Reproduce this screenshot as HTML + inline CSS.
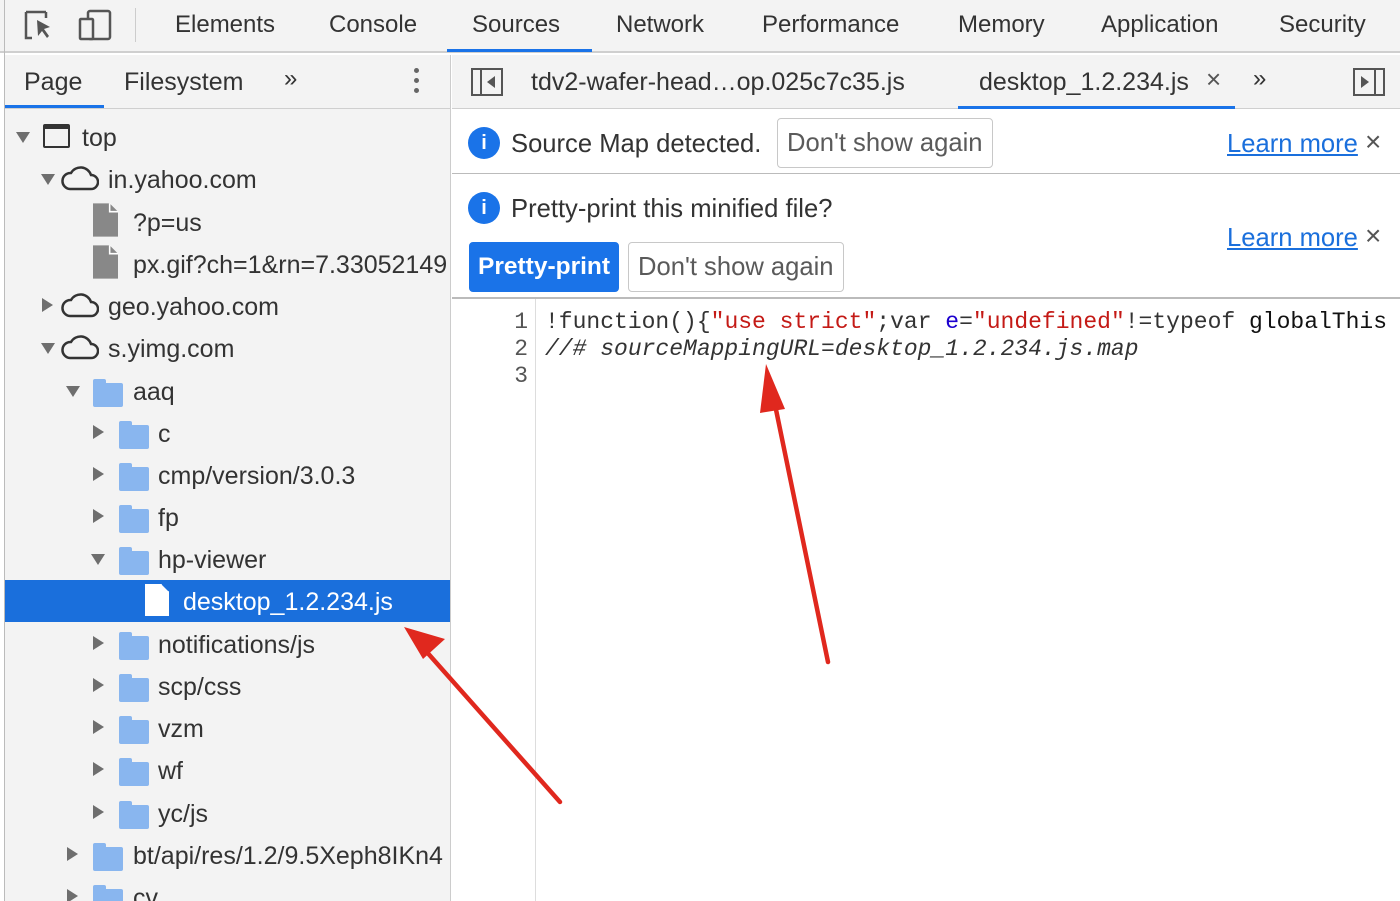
<!DOCTYPE html>
<html><head><meta charset="utf-8"><style>
*{margin:0;padding:0;box-sizing:border-box}
body{width:1400px;height:901px;overflow:hidden;background:#fff;font-family:"Liberation Sans",Arial,sans-serif;color:#333;position:relative}
.a{position:absolute;white-space:nowrap}
.t{font-size:24px;line-height:30px}
.tt{font-size:25px;line-height:30px}
.ib{font-size:25.6px;line-height:30px}
.tab{color:#333}
.mono{font-family:"Liberation Mono",monospace;font-size:23px;line-height:27px}
.btn{position:absolute;border:1px solid #c8c8c8;border-radius:4px;background:#fff;color:#5a5a5a;font-size:25.6px;line-height:48px;padding:0 9px}
.link{color:#1a6fdc;text-decoration:underline}
.tri{position:absolute;width:0;height:0}
.r{border-top:7px solid transparent;border-bottom:7px solid transparent;border-left:11px solid #6e6e6e}
.d{border-left:7px solid transparent;border-right:7px solid transparent;border-top:11px solid #6e6e6e}
.fold{position:absolute;width:30px;height:24px;background:#89b6ef;border-radius:2px}
.fold:before{content:"";position:absolute;left:0;top:-4px;width:13px;height:6px;background:#89b6ef;border-radius:2px 2px 0 0}
</style></head><body>
<div class="a" style="left:0;top:0;width:1400px;height:53px;background:#f3f3f3;border-bottom:2px solid #cfcfcf"></div>
<div class="a" style="left:4px;top:0;width:1px;height:901px;background:#bbb"></div>
<svg class="a" style="left:22px;top:8px" width="100" height="34" viewBox="0 0 100 34">
<path d="M4 4h20M4 4v26h6M24 4v6" stroke="#555" stroke-width="2.5" fill="none"/>
<path d="M15 12l13 7-6 2 5 7-2 2-5-7-4 5z" fill="#555"/>
<rect x="66" y="3" width="22" height="28" rx="2" stroke="#555" stroke-width="2.5" fill="none"/>
<rect x="58" y="11" width="13" height="20" rx="1" stroke="#555" stroke-width="2.5" fill="#f3f3f3"/>
</svg>
<div class="a" style="left:135px;top:8px;width:1px;height:34px;background:#ccc"></div>
<div class="a t tab" style="left:175px;top:10px">Elements</div>
<div class="a t tab" style="left:329px;top:10px">Console</div>
<div class="a t tab" style="left:472px;top:10px">Sources</div>
<div class="a" style="left:447px;top:49px;width:145px;height:3px;background:#1a73e8"></div>
<div class="a t tab" style="left:616px;top:10px">Network</div>
<div class="a t tab" style="left:762px;top:10px">Performance</div>
<div class="a t tab" style="left:958px;top:10px">Memory</div>
<div class="a t tab" style="left:1101px;top:10px">Application</div>
<div class="a t tab" style="left:1279px;top:10px">Security</div>

<div class="a" style="left:5px;top:55px;width:446px;height:846px;background:#f3f3f3;border-right:1px solid #ccc"></div>
<div class="a" style="left:5px;top:108px;width:446px;height:1px;background:#cfcfcf"></div>
<div class="a tt" style="left:24px;top:67px">Page</div>
<div class="a" style="left:5px;top:105px;width:99px;height:3px;background:#1a73e8"></div>
<div class="a tt" style="left:124px;top:67px">Filesystem</div>
<div class="a t" style="left:284px;top:64px">»</div>
<div class="a" style="left:414px;top:68px;width:5px;height:5px;border-radius:50%;background:#666;box-shadow:0 10px 0 #666,0 20px 0 #666"></div>

<div class="a" style="left:452px;top:55px;width:948px;height:54px;background:#f3f3f3;border-bottom:1px solid #cfcfcf"></div>
<svg class="a" style="left:471px;top:68px" width="32" height="28"><rect x="1" y="1" width="30" height="26" fill="none" stroke="#555" stroke-width="2"/><line x1="10" y1="1" x2="10" y2="27" stroke="#555" stroke-width="2"/><path d="M24 8v12l-8-6z" fill="#555"/></svg>
<div class="a tt" style="left:531px;top:67px">tdv2-wafer-head…op.025c7c35.js</div>
<div class="a tt" style="left:979px;top:67px">desktop_1.2.234.js</div>
<div class="a" style="left:1206px;top:64px;font-size:26px;color:#555">×</div>
<div class="a" style="left:958px;top:106px;width:277px;height:3px;background:#1a73e8"></div>
<div class="a t" style="left:1253px;top:64px">»</div>
<svg class="a" style="left:1353px;top:68px" width="32" height="28"><rect x="1" y="1" width="30" height="26" fill="none" stroke="#555" stroke-width="2"/><line x1="22" y1="1" x2="22" y2="27" stroke="#555" stroke-width="2"/><path d="M8 8v12l8-6z" fill="#555"/></svg>

<div class="a" style="left:452px;top:173px;width:948px;height:1px;background:#bbb"></div>
<div class="a" style="left:452px;top:297px;width:948px;height:2px;background:#bbb"></div>
<div class="a" style="left:468px;top:127px;width:32px;height:32px;border-radius:50%;background:#1a73e8;color:#fff;font-weight:bold;font-size:20px;text-align:center;line-height:32px">i</div>
<div class="a ib" style="left:511px;top:129px">Source Map detected.</div>
<div class="btn" style="left:777px;top:118px">Don't show again</div>
<div class="a ib link" style="left:1227px;top:129px">Learn more</div>
<div class="a" style="left:1365px;top:126px;font-size:28px;color:#555">×</div>
<div class="a" style="left:468px;top:192px;width:32px;height:32px;border-radius:50%;background:#1a73e8;color:#fff;font-weight:bold;font-size:20px;text-align:center;line-height:32px">i</div>
<div class="a ib" style="left:511px;top:194px">Pretty-print this minified file?</div>
<div class="btn" style="left:469px;top:242px;background:#1a73e8;border-color:#1a73e8;color:#fff;font-weight:bold;padding:0 8px;font-size:24.5px">Pretty-print</div>
<div class="btn" style="left:628px;top:242px">Don't show again</div>
<div class="a ib link" style="left:1227px;top:223px">Learn more</div>
<div class="a" style="left:1365px;top:220px;font-size:28px;color:#555">×</div>

<div class="a" style="left:535px;top:299px;width:1px;height:602px;background:#ddd"></div>
<div class="a mono" style="left:500px;top:309px;width:28px;text-align:right;color:#555">1<br>2<br>3</div>
<div class="a mono" style="left:545px;top:309px;color:#333">!function(){<span style="color:#c41a16">"use strict"</span>;var <span style="color:#1c00cf">e</span>=<span style="color:#c41a16">"undefined"</span>!=typeof <span style="color:#111">globalThis</span><br><i>//# sourceMappingURL=desktop_1.2.234.js.map</i></div>

<svg width="0" height="0" style="position:absolute"><defs><symbol id="cl" viewBox="0 0 38 26"><path d="M9 24h21a7 7 0 0 0 0-14 11 11 0 0 0-20-2A8 8 0 0 0 9 24z" fill="none" stroke="#333" stroke-width="2.5"/></symbol>
<symbol id="fi" viewBox="0 0 24 32"><path d="M0 0h16l8 8v24H0z" fill="currentColor"/><path d="M16 0v8h8" fill="none" stroke="#fff" stroke-width="1.5"/></symbol></defs></svg>

<div class="a" style="left:0;top:109px;width:450px;height:792px;overflow:hidden">
<div style="position:absolute;left:0;top:-109px;width:450px;height:901px">
<div class="a" style="left:5px;top:580px;width:445px;height:42px;background:#1a6fdc"></div>
<div class="tri d" style="left:16px;top:132px"></div>
<div class="a" style="left:43px;top:124px;width:27px;height:24px;border:2.5px solid #333;border-top-width:5px;border-radius:2px"></div>
<div class="a tt" style="left:82px;top:123px">top</div>
<div class="tri d" style="left:41px;top:174px"></div>
<svg class="a" style="left:61px;top:165px" width="38" height="26"><use href="#cl"/></svg>
<div class="a tt" style="left:108px;top:165px">in.yahoo.com</div>
<svg class="a" style="left:93px;top:203px;color:#888" width="25" height="34"><use href="#fi"/></svg>
<div class="a tt" style="left:133px;top:208px">?p=us</div>
<svg class="a" style="left:93px;top:245px;color:#888" width="25" height="34"><use href="#fi"/></svg>
<div class="a tt" style="left:133px;top:250px">px.gif?ch=1&amp;rn=7.33052149</div>
<div class="tri r" style="left:42px;top:298px"></div>
<svg class="a" style="left:61px;top:292px" width="38" height="26"><use href="#cl"/></svg>
<div class="a tt" style="left:108px;top:292px">geo.yahoo.com</div>
<div class="tri d" style="left:41px;top:343px"></div>
<svg class="a" style="left:61px;top:334px" width="38" height="26"><use href="#cl"/></svg>
<div class="a tt" style="left:108px;top:334px">s.yimg.com</div>
<div class="tri d" style="left:66px;top:386px"></div>
<div class="fold" style="left:93px;top:383px"></div>
<div class="a tt" style="left:133px;top:377px">aaq</div>
<div class="tri r" style="left:93px;top:425px"></div><div class="fold" style="left:119px;top:425px"></div><div class="a tt" style="left:158px;top:419px">c</div>
<div class="tri r" style="left:93px;top:467px"></div><div class="fold" style="left:119px;top:467px"></div><div class="a tt" style="left:158px;top:461px">cmp/version/3.0.3</div>
<div class="tri r" style="left:93px;top:509px"></div><div class="fold" style="left:119px;top:509px"></div><div class="a tt" style="left:158px;top:503px">fp</div>
<div class="tri d" style="left:91px;top:554px"></div><div class="fold" style="left:119px;top:551px"></div><div class="a tt" style="left:158px;top:545px">hp-viewer</div>
<svg class="a" style="left:145px;top:583px;color:#fff" width="24" height="34"><use href="#fi"/></svg>
<div class="a tt" style="left:183px;top:587px;color:#fff">desktop_1.2.234.js</div>
<div class="tri r" style="left:93px;top:636px"></div><div class="fold" style="left:119px;top:636px"></div><div class="a tt" style="left:158px;top:630px">notifications/js</div>
<div class="tri r" style="left:93px;top:678px"></div><div class="fold" style="left:119px;top:678px"></div><div class="a tt" style="left:158px;top:672px">scp/css</div>
<div class="tri r" style="left:93px;top:720px"></div><div class="fold" style="left:119px;top:720px"></div><div class="a tt" style="left:158px;top:714px">vzm</div>
<div class="tri r" style="left:93px;top:762px"></div><div class="fold" style="left:119px;top:762px"></div><div class="a tt" style="left:158px;top:756px">wf</div>
<div class="tri r" style="left:93px;top:805px"></div><div class="fold" style="left:119px;top:805px"></div><div class="a tt" style="left:158px;top:799px">yc/js</div>
<div class="tri r" style="left:67px;top:847px"></div><div class="fold" style="left:93px;top:847px"></div><div class="a tt" style="left:133px;top:841px">bt/api/res/1.2/9.5Xeph8IKn4</div>
<div class="tri r" style="left:67px;top:889px"></div><div class="fold" style="left:93px;top:889px"></div><div class="a tt" style="left:133px;top:883px">cv</div>
</div></div>

<svg class="a" style="left:0;top:0" width="1400" height="901">
<line x1="560" y1="802" x2="425" y2="650" stroke="#e0281e" stroke-width="4.5" stroke-linecap="round"/>
<path d="M404 627l41 12-22 20z" fill="#e0281e"/>
<line x1="828" y1="662" x2="773" y2="395" stroke="#e0281e" stroke-width="4.5" stroke-linecap="round"/>
<path d="M766 364l19 45-25 4z" fill="#e0281e"/>
</svg>
</body></html>
